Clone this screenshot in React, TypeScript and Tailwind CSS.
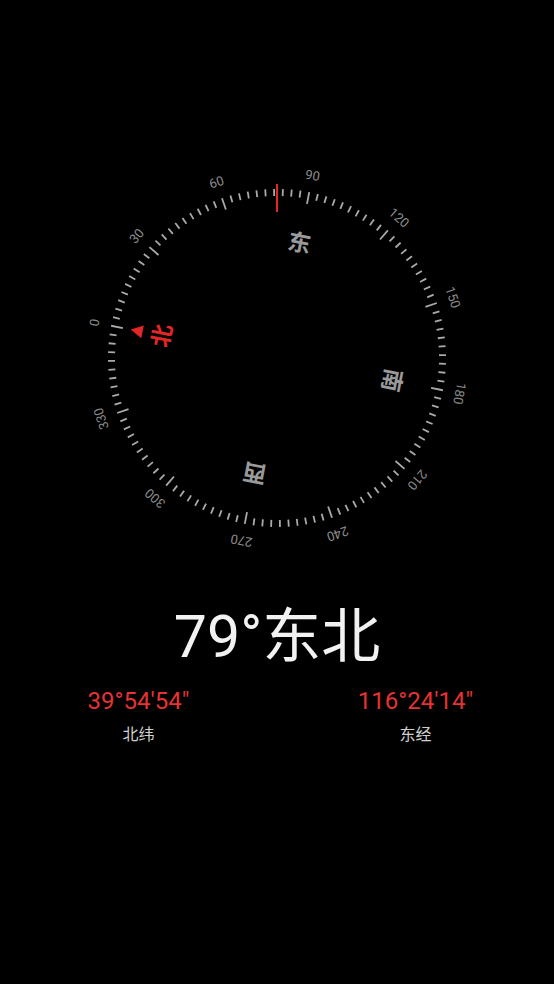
import React from "react";

const HEADING = 79;

function Compass() {
  const ticks = Array.from({ length: 120 }, (_, i) => i * 3);
  const labels = Array.from({ length: 12 }, (_, i) => i * 30);
  const cardinals = [
    { v: 0, t: "北", c: "#e32626" },
    { v: 90, t: "东", c: "#9a9a9a" },
    { v: 180, t: "南", c: "#9a9a9a" },
    { v: 270, t: "西", c: "#9a9a9a" },
  ];
  return (
    <svg width={420} height={420} viewBox="-210 -210 420 420" className="block">
      <g transform={`rotate(${-HEADING})`}>
        {ticks.map((v) => {
          const long = v % 30 === 0;
          return (
            <line
              key={v}
              x1={0}
              y1={-169}
              x2={0}
              y2={long ? -157 : -162}
              stroke="#aaaaaa"
              strokeWidth={1.8}
              transform={`rotate(${v})`}
            />
          );
        })}
        {labels.map((v) => (
          <g key={v} transform={`rotate(${v})`}>
            <text
              x={0}
              y={-186}
              textAnchor="middle"
              dominantBaseline="central"
              fill="#8c8c8c"
              fontSize={13}
              fontFamily="Roboto, 'Noto Sans', sans-serif"
            >
              {v}
            </text>
          </g>
        ))}
        {cardinals.map((c) => (
          <g key={c.v} transform={`rotate(${c.v})`}>
            <text
              x={0}
              y={-119}
              textAnchor="middle"
              dominantBaseline="central"
              fill={c.c}
              fontSize={23}
              fontWeight={600}
              fontFamily="'Noto Sans CJK SC', sans-serif"
            >
              {c.t}
            </text>
          </g>
        ))}
        <polygon points="0,-149 -6.5,-137 6.5,-137" fill="#e32626" />
      </g>
      <line x1={0} y1={-174} x2={0} y2={-146} stroke="#e32626" strokeWidth={2} />
    </svg>
  );
}

export default function App() {
  return (
    <div className="w-[554px] h-[984px] bg-black overflow-hidden flex flex-col items-center pt-[148px]">
      <Compass />
      <div className="mt-[40px] text-[59px] leading-[58px] text-[#f2f2f2] font-['Roboto','Noto_Sans_CJK_SC',sans-serif]">
        79°东北
      </div>
      <div className="mt-[24px] w-full grid grid-cols-2">
        <div className="flex flex-col items-center">
          <div className="text-[24px] leading-[23px] text-[#e53333] font-['Roboto',sans-serif]">
            39°54'54"
          </div>
          <div className="mt-[12px] text-[16px] leading-[16px] text-[#cfcfcf] font-['Noto_Sans_CJK_SC',sans-serif]">
            北纬
          </div>
        </div>
        <div className="flex flex-col items-center">
          <div className="text-[24px] leading-[23px] text-[#e53333] font-['Roboto',sans-serif]">
            116°24'14"
          </div>
          <div className="mt-[12px] text-[16px] leading-[16px] text-[#cfcfcf] font-['Noto_Sans_CJK_SC',sans-serif]">
            东经
          </div>
        </div>
      </div>
    </div>
  );
}
